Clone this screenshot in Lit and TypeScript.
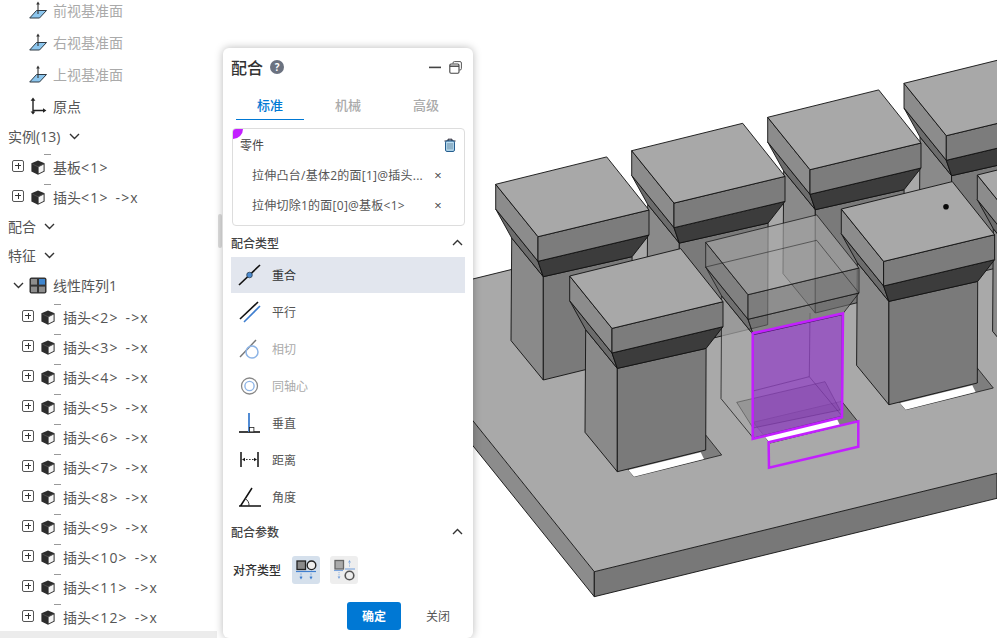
import { LitElement, html, css, svg } from 'lit';
import { customElement } from 'lit/decorators.js';

type P = [number, number];

const pts = (x: number, y: number, list: P[]) => list.map(([a, b]) => `${x + a},${y + b}`).join(' ');

// one pin on the plate, offsets are from the left corner of its cap
const notch = (x: number, y: number) => svg`
  <polygon points=${pts(x, y, [[136, 159], [152, 179], [64.3, 200.7], [47.6, 180]])} fill="#7e7e7e" stroke="#1a1a1a" stroke-width=".8" />
  <polygon points=${pts(x, y, [[58.6, 194], [131, 176.3], [134.3, 183], [64.3, 200.7]])} fill="#fff" />
`;

const pin = (x: number, y: number) => svg`
  <g stroke="#111" stroke-width=".9" stroke-linejoin="round">
    <polygon points=${pts(x, y, [[16, 53.7], [47.6, 92.4], [47.6, 195.7], [15.3, 156.3]])} fill="#8a8a8a" />
    <polygon points=${pts(x, y, [[47.6, 92.4], [136.4, 72.4], [136, 174], [47.6, 195.7]])} fill="#7a7a7a" />
    <polygon points=${pts(x, y, [[0, 24.7], [42.3, 77], [47.6, 92.4], [16, 53.7]])} fill="#6c6c6c" />
    <polygon points=${pts(x, y, [[42.3, 77], [153.3, 50.7], [136.4, 72.4], [47.6, 92.4]])} fill="#3c3c3c" />
    <polygon points=${pts(x, y, [[0, 0], [42.3, 52.4], [42.3, 77], [0, 24.7]])} fill="#8c8c8c" />
    <polygon points=${pts(x, y, [[42.3, 52.4], [153.3, 25.7], [153.3, 50.7], [42.3, 77]])} fill="#7c7c7c" />
    <polygon points=${pts(x, y, [[0, 0], [111, -27.4], [153.3, 25.7], [42.3, 52.4]])} fill="#a8a8a8" />
  </g>
`;

// the pin being placed, drawn see-through
const ghostPin = (x: number, y: number) => svg`
  <g stroke="#111" stroke-width=".9" stroke-opacity=".8" stroke-linejoin="round">
    <polygon points=${pts(x, y, [[16, 53.7], [47.6, 92.4], [47.6, 195.7], [15.3, 156.3]])} fill="#a8a8a8" fill-opacity=".7" />
    <polygon points=${pts(x, y, [[47.6, 92.4], [136.4, 72.4], [136, 174], [47.6, 195.7]])} fill="#a8a8a8" fill-opacity=".7" />
    <polygon points="736.7,402.3 825,381.7 840,410 753,428" fill="#000" fill-opacity=".1" stroke-opacity=".4" />
    <polyline points="810,313 809.3,376.7 753,391" fill="none" stroke-opacity=".45" />
    <line x1="809.3" y1="376.7" x2="842" y2="416" stroke-opacity=".45" />
    <polygon points=${pts(x, y, [[0, 24.7], [42.3, 77], [47.6, 92.4], [16, 53.7]])} fill="#666" fill-opacity=".5" />
    <polygon points=${pts(x, y, [[42.3, 77], [153.3, 50.7], [136.4, 72.4], [47.6, 92.4]])} fill="#6c6c6c" fill-opacity=".6" />
    <polygon points=${pts(x, y, [[0, 0], [42.3, 52.4], [42.3, 77], [0, 24.7]])} fill="#858585" fill-opacity=".6" />
    <polygon points=${pts(x, y, [[42.3, 52.4], [153.3, 25.7], [153.3, 50.7], [42.3, 77]])} fill="#808080" fill-opacity=".65" />
    <polygon points=${pts(x, y, [[0, 0], [111, -27.4], [153.3, 25.7], [42.3, 52.4]])} fill="#a8a8a8" fill-opacity=".65" />
    <polyline points=${pts(x, y, [[0, 24.7], [111, -2], [153.3, 50.7]])} fill="none" stroke-opacity=".55" />
  </g>
`;

const backRow: P[] = [[904, 83.3], [767.7, 117.3], [631.7, 150.7], [495.7, 184.3]];
const frontRow: P[] = [[977.3, 175], [841.3, 209]];

const scene = html`
  <svg class="scene" viewBox="218 0 779 638" width="779" height="638">
    <polygon points="420,292 997,150 997,473.3 594.3,571.7 420,355" fill="#a9a9a9" />
    <polygon points="420,355 594.3,571.7 594.3,596.7 420,380" fill="#8c8c8c" stroke="#111" stroke-width=".9" />
    <polygon points="594.3,571.7 997,473.3 997,498.3 594.3,596.7" fill="#787878" stroke="#111" stroke-width=".9" />
    <line x1="420" y1="292" x2="997" y2="150" stroke="#111" stroke-width=".9" />
    ${[...frontRow, [705.7, 242.3] as P, [569.7, 276] as P].map(([x, y]) => notch(x, y))}
    ${backRow.map(([x, y]) => pin(x, y))}
    ${frontRow.map(([x, y]) => pin(x, y))}
    ${ghostPin(705.7, 242.3)}
    ${pin(569.7, 276)}
    <polygon points="752.7,333.3 843,313.3 842,417.3 752.7,439" fill="#8a1fd0" fill-opacity=".55" stroke="#c31fff" stroke-width="2.5" />
    <polygon points="768.6,442.3 858.3,421.3 858.3,446.7 769,467.7" fill="none" stroke="#c31fff" stroke-width="2.5" />
    <circle cx="946" cy="206.7" r="2.8" fill="#0a0a0a" />
  </svg>
`;

const planeIcon = html`<svg class="ico" width="18" height="18" viewBox="0 0 18 18">
  <polygon points=".7,17 7.5,9.5 17.5,9.5 10.5,17" fill="#8cc6ee" stroke="#2f3a44" stroke-width="1" />
  <line x1="9" y1="13" x2="9" y2="2.5" stroke="#333" stroke-width="1.1" />
  <polygon points="9,.6 10.8,3.6 7.2,3.6" fill="#333" />
</svg>`;

const originIcon = html`<svg class="ico" width="18" height="18" viewBox="0 0 18 18">
  <path d="M4 2.5V15.5M4 13.5H15" fill="none" stroke="#222" stroke-width="1.4" />
  <path d="M4 .4 6.4 3.8H1.6ZM4 17.6 1.6 14.6H6.4ZM17.4 13.5 14 11.2V15.8Z" fill="#222" />
</svg>`;

const cubeIcon = html`<svg class="ico" width="14" height="15" viewBox="0 0 14 15">
  <polygon points="7,.4 13.6,3.2 13.6,11.6 7,14.8 .4,11.6 .4,3.2" fill="#2d2d2d" />
  <polygon points="7.6,7 12.6,4.6 12.6,11 7.6,13.4" fill="#f4f4f4" />
  <polyline points="1.4,4 7,6.8 12.6,4" fill="none" stroke="#666" stroke-width=".6" />
</svg>`;

const arrayIcon = html`<svg class="ico" width="18" height="17" viewBox="0 0 18 17">
  <rect x=".5" y=".5" width="17" height="16" rx="2" fill="#333" />
  <rect x="2" y="2" width="6" height="5.6" fill="#8d8d8d" />
  <rect x="10" y="2" width="6" height="5.6" fill="#3f86cf" />
  <rect x="2" y="9.6" width="6" height="5.6" fill="#8d8d8d" />
  <rect x="10" y="9.6" width="6" height="5.6" fill="#8d8d8d" />
</svg>`;

const chevron = (up = false) => html`<svg class="chev" width="11" height="7" viewBox="0 0 11 7">
  <path d=${up ? 'M1 6 5.5 1.6 10 6' : 'M1 1 5.5 5.4 10 1'} fill="none" stroke="#333" stroke-width="1.4" />
</svg>`;

const mateTypes = [
  {
    name: '重合',
    on: true,
    icon: svg`<line x1="1" y1="21" x2="22" y2="1" stroke="#111" stroke-width="1.6" /><circle cx="11.5" cy="11" r="2.8" fill="#4a8ad0" stroke="#234" stroke-width=".7" />`,
  },
  {
    name: '平行',
    icon: svg`<line x1="2" y1="18" x2="20" y2="1" stroke="#111" stroke-width="1.6" /><line x1="6" y1="21" x2="22" y2="5" stroke="#3f7fd0" stroke-width="1.6" />`,
  },
  {
    name: '相切',
    off: true,
    icon: svg`<line x1="2" y1="19" x2="18" y2="2" stroke="#777" stroke-width="1.4" /><circle cx="14" cy="14" r="6" fill="none" stroke="#8db4e6" stroke-width="1.5" />`,
  },
  {
    name: '同轴心',
    off: true,
    icon: svg`<circle cx="11.5" cy="11" r="8" fill="none" stroke="#888" stroke-width="1.3" /><circle cx="11.5" cy="11" r="4.6" fill="none" stroke="#8db4e6" stroke-width="1.4" />`,
  },
  {
    name: '垂直',
    icon: svg`<line x1="1" y1="20" x2="22" y2="20" stroke="#111" stroke-width="1.6" /><line x1="11" y1="1" x2="11" y2="20" stroke="#3f7fd0" stroke-width="1.8" /><rect x="11.5" y="15.5" width="4.4" height="4.4" fill="#fff" stroke="#222" stroke-width=".8" />`,
  },
  {
    name: '距离',
    icon: svg`<path d="M3 3V18M20 3V18" stroke="#111" stroke-width="1.5" fill="none" /><line x1="5" y1="10.5" x2="18" y2="10.5" stroke="#333" stroke-width="1" stroke-dasharray="1.6 1.4" /><path d="M4 10.5 7 8.8V12.2ZM19 10.5 16 8.8V12.2Z" fill="#111" />`,
  },
  {
    name: '角度',
    icon: svg`<path d="M1 20H23M2.5 20 14 2" stroke="#111" stroke-width="1.5" fill="none" /><path d="M7 12.5A8 8 0 0 1 11 20" stroke="#333" stroke-width="1" fill="none" />`,
  },
];

@customElement('app-root')
export class AppRoot extends LitElement {
  static styles = css`
    :host {
      display: block;
      position: relative;
      width: 997px;
      height: 638px;
      overflow: hidden;
      background: #fff;
      font-family: 'Open Sans', 'Noto Sans CJK SC', sans-serif;
      color: #555;
    }

    .layout {
      display: grid;
      grid-template-columns: 218px 1fr;
      height: 638px;
    }

    .tree {
      display: flex;
      flex-direction: column;
      height: 638px;
      overflow: hidden;
      background: #fff;
      font-size: 14px;
      position: relative;
    }

    .tree-inner {
      margin-top: -6px;
      display: flex;
      flex-direction: column;
    }

    .foot {
      position: absolute;
      left: 0;
      right: 1px;
      top: 631px;
      height: 7px;
      background: #ececec;
    }

    .handle {
      position: absolute;
      left: 218px;
      top: 214px;
      width: 4px;
      height: 34px;
      border-radius: 2px;
      background: #dcdcdc;
    }

    .row {
      display: flex;
      align-items: center;
      height: 30px;
      white-space: nowrap;
      flex: none;
    }

    .plane {
      height: 32px;
      padding-left: 29px;
      gap: 6px;
      color: #aaa;
    }

    .origin {
      color: #555;
    }

    .section {
      height: 28px;
      padding-left: 8px;
      gap: 8px;
    }

    .section.wide {
      gap: 9px;
    }

    .inst {
      padding-left: 12px;
      gap: 7px;
    }

    .inst.nested {
      padding-left: 22px;
    }

    .latin {
      letter-spacing: 1.2px;
      word-spacing: 2px;
    }

    .gap1 {
      margin-top: 1px;
    }

    .gap2 {
      margin-top: 2px;
    }

    .array {
      padding-left: 13px;
      gap: 5px;
    }

    .array span {
      margin-left: 1px;
    }

    .expand {
      width: 10px;
      height: 10px;
      border: 1px solid #555;
      border-radius: 2px;
      position: relative;
      flex: none;
      margin-top: -3px;
    }

    .expand::before,
    .expand::after {
      content: '';
      position: absolute;
      background: #333;
    }

    .expand::before {
      left: 2px;
      right: 2px;
      top: 4.5px;
      height: 1px;
    }

    .expand::after {
      top: 2px;
      bottom: 2px;
      left: 4.5px;
      width: 1px;
    }

    .cube {
      position: relative;
      display: flex;
      margin-right: 1px;
    }

    .cube::before {
      content: '';
      position: absolute;
      left: 13px;
      top: -6px;
      width: 7px;
      height: 1px;
      background: #999;
    }

    .ico {
      display: block;
      flex: none;
    }

    .chev {
      display: block;
      flex: none;
    }

    .scene {
      display: block;
    }

    .panel {
      position: absolute;
      left: 223px;
      top: 48px;
      width: 250px;
      height: 590px;
      box-sizing: border-box;
      padding: 0 8px;
      background: #fff;
      border-radius: 6px;
      box-shadow: 0 0 9px rgba(0, 0, 0, 0.28);
      display: flex;
      flex-direction: column;
      font-size: 12px;
    }

    .head {
      display: flex;
      align-items: center;
      height: 38px;
      flex: none;
      color: #333;
      font-size: 16px;
      font-weight: 500;
      gap: 7px;
    }

    .help {
      width: 14px;
      height: 14px;
      border-radius: 50%;
      background: #6b7280;
      color: #fff;
      font-size: 10px;
      font-weight: 700;
      display: flex;
      align-items: center;
      justify-content: center;
    }

    .head-tools {
      margin-left: auto;
      display: flex;
      align-items: center;
      gap: 7px;
      padding-right: 3px;
    }

    .tabs {
      display: grid;
      grid-template-columns: 68px 88px 68px;
      margin: 0 0 0 5px;
      flex: none;
      height: 34px;
      font-size: 13px;
      color: #aaa;
      font-weight: 500;
    }

    .tab {
      box-sizing: border-box;
      height: 34px;
      padding-top: 3px;
      display: flex;
      align-items: center;
      justify-content: center;
      border-bottom: 1px solid transparent;
    }

    .tab.on {
      color: #0078d4;
      border-bottom-color: #0078d4;
    }

    .parts {
      position: relative;
      margin-top: 8px;
      margin-left: 1px;
      height: 98px;
      flex: none;
      box-sizing: border-box;
      border: 1px solid #ddd;
      border-radius: 4px;
      padding: 0 7px;
      overflow: hidden;
    }

    .corner {
      position: absolute;
      left: 0;
      top: 0;
      width: 10px;
      height: 10px;
      background: #c31fff;
      border-bottom-right-radius: 10px;
    }

    .parts-head {
      display: flex;
      align-items: center;
      justify-content: space-between;
      height: 32px;
      margin-bottom: -1px;
      padding: 0 1px 0 0;
      color: #444;
    }

    .part {
      display: flex;
      align-items: center;
      height: 30px;
      padding-left: 12px;
      color: #555;
      letter-spacing: 0.25px;
    }

    .part .x {
      margin-left: auto;
      margin-right: 15px;
      color: #444;
      font-size: 13px;
    }

    .sec-title {
      display: flex;
      align-items: center;
      justify-content: space-between;
      flex: none;
      height: 29px;
      padding-top: 2px;
      font-weight: 500;
      color: #444;
      padding-right: 2px;
    }

    .mates {
      display: flex;
      flex-direction: column;
      flex: none;
    }

    .mate {
      display: flex;
      align-items: center;
      height: 37px;
      gap: 10px;
      padding-left: 7px;
      width: 234px;
      box-sizing: border-box;
      color: #555;
    }

    .mate.on {
      background: #e2e6ee;
      height: 36px;
      color: #333;
    }

    .mate.off {
      color: #aaa;
    }

    .align {
      display: flex;
      align-items: center;
      height: 28px;
      margin-top: 10px;
      flex: none;
      padding-left: 2px;
      color: #333;
      font-weight: 500;
    }

    .tile {
      width: 28px;
      height: 28px;
      border-radius: 3px;
      background: #eee;
      display: flex;
      margin-left: 10px;
    }

    .tile.on {
      background: #d5e0ec;
      margin-left: 11px;
    }

    .foot-btns {
      display: flex;
      align-items: center;
      justify-content: flex-end;
      margin-top: 18px;
      flex: none;
      padding-right: 15px;
      gap: 25px;
    }

    .ok {
      width: 54px;
      height: 28px;
      background: #0078d4;
      color: #fff;
      border: none;
      border-radius: 3px;
      font: inherit;
      font-weight: 700;
      padding: 0;
    }

    .close {
      color: #555;
    }
  `;

  private inst(name: string, rest: string, nested = false, cls = '') {
    return html`<div class="row inst ${nested ? 'nested' : ''} ${cls}">
      <span class="expand"></span>
      <span class="cube">${cubeIcon}</span>
      <span>${name}<span class="latin">${rest}</span></span>
    </div>`;
  }

  render() {
    const nums = [2, 3, 4, 5, 6, 7, 8, 9, 10, 11, 12];
    return html`
      <div class="layout">
        <div class="tree">
          <div class="tree-inner">
            ${['前视基准面', '右视基准面', '上视基准面'].map(
              (t) => html`<div class="row plane">${planeIcon}<span>${t}</span></div>`
            )}
            <div class="row plane origin">${originIcon}<span>原点</span></div>
            <div class="row section wide"><span>实例(13)</span>${chevron()}</div>
            ${this.inst('基板', '<1>', false, 'gap2')} ${this.inst('插头', '<1> ->x')}
            <div class="row section"><span>配合</span>${chevron()}</div>
            <div class="row section gap1"><span>特征</span>${chevron()}</div>
            <div class="row array gap1">${chevron()}${arrayIcon}<span>线性阵列1</span></div>
            ${nums.map((n, i) => this.inst('插头', `<${n}> ->x`, true, i === 0 ? 'gap2' : ''))}
          </div>
          <div class="foot"></div>
        </div>
        <div class="canvas">${scene}</div>
      </div>
      <div class="handle"></div>
      <div class="panel">
        <div class="head">
          <span>配合</span>
          <span class="help">?</span>
          <span class="head-tools">
            <svg width="13" height="3" viewBox="0 0 13 3"><rect width="12" height="1.6" y=".6" fill="#444" /></svg>
            <svg width="13" height="13" viewBox="0 0 13 13">
              <path d="M4 2.6V2A1.4 1.4 0 0 1 5.4.6H11A1.4 1.4 0 0 1 12.4 2V7.6A1.4 1.4 0 0 1 11 9H10.4" fill="none" stroke="#555" stroke-width="1" />
              <rect x=".8" y="3" width="9.2" height="9.2" rx="1.2" fill="#fff" stroke="#444" stroke-width="1.1" />
              <line x1=".8" y1="5.2" x2="10" y2="5.2" stroke="#444" stroke-width="1.4" />
            </svg>
          </span>
        </div>
        <div class="tabs">
          <div class="tab on">标准</div>
          <div class="tab">机械</div>
          <div class="tab">高级</div>
        </div>
        <div class="parts">
          <div class="corner"></div>
          <div class="parts-head">
            <span>零件</span>
            <svg width="12" height="14" viewBox="0 0 12 14">
              <path d="M.5 3H11.5M4 3V1.2H8V3" fill="none" stroke="#223" stroke-width="1" />
              <rect x="1.6" y="3" width="8.8" height="10.4" rx="1.2" fill="#bfe0f2" stroke="#0f4c81" stroke-width="1" />
              <path d="M4 5V11.5M6 5V11.5M8 5V11.5" stroke="#4b6f8a" stroke-width=".8" />
            </svg>
          </div>
          <div class="part"><span>拉伸凸台/基体2的面[1]@插头...</span><span class="x">×</span></div>
          <div class="part"><span>拉伸切除1的面[0]@基板<1></span><span class="x">×</span></div>
        </div>
        <div class="sec-title"><span>配合类型</span>${chevron(true)}</div>
        <div class="mates">
          ${mateTypes.map(
            (m) => html`<div class="mate ${m.on ? 'on' : ''} ${m.off ? 'off' : ''}">
              <svg class="ico" width="24" height="22" viewBox="0 0 24 22">${m.icon}</svg>
              <span>${m.name}</span>
            </div>`
          )}
        </div>
        <div class="sec-title"><span>配合参数</span>${chevron(true)}</div>
        <div class="align">
          <span>对齐类型</span>
          <span class="tile on">
            <svg width="28" height="28" viewBox="0 0 28 28">
              <rect x="5" y="5" width="8.5" height="8.5" fill="#8a8a8a" stroke="#222" stroke-width="1.3" />
              <circle cx="19.5" cy="9.3" r="4.3" fill="#eee" stroke="#222" stroke-width="1.4" />
              <line x1="4" y1="15.5" x2="24" y2="15.5" stroke="#3f7fd0" stroke-width="1.2" />
              <path d="M9 17.5V22M19 17.5V22" stroke="#3f7fd0" stroke-width=".8" stroke-dasharray="1.2 1" />
              <path d="M9 23.5 7.4 20.8H10.6ZM19 23.5 17.4 20.8H20.6Z" fill="#3f7fd0" />
            </svg>
          </span>
          <span class="tile">
            <svg width="28" height="28" viewBox="0 0 28 28">
              <rect x="5" y="4.5" width="8.5" height="8.5" fill="#aaa" stroke="#666" stroke-width="1.3" />
              <circle cx="19.5" cy="19.5" r="4.3" fill="#eee" stroke="#555" stroke-width="1.6" />
              <line x1="4" y1="14.5" x2="13" y2="14.5" stroke="#7ba4dc" stroke-width="1.1" />
              <line x1="15" y1="13" x2="25" y2="13" stroke="#7ba4dc" stroke-width="1.1" />
              <path d="M9 16V21M19.5 5V11" stroke="#7ba4dc" stroke-width=".8" stroke-dasharray="1.2 1" />
              <path d="M9 23 7.6 20.4H10.4ZM19.5 4 18.1 6.6H20.9Z" fill="#7ba4dc" />
            </svg>
          </span>
        </div>
        <div class="foot-btns">
          <button class="ok">确定</button>
          <span class="close">关闭</span>
        </div>
      </div>
    `;
  }
}

declare global {
  interface HTMLElementTagNameMap {
    'app-root': AppRoot;
  }
}
